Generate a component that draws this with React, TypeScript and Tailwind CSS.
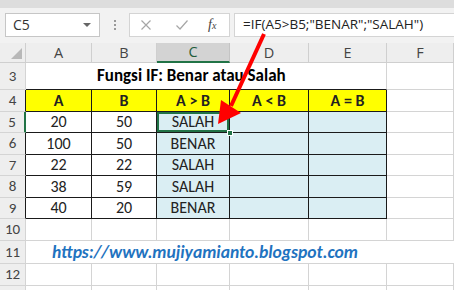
import React from "react";

// column widths: row header, A, B, C, D, E, F
const colW = ["w-[26px]", "w-[66px]", "w-[65px]", "w-[73px]", "w-[79px]", "w-[78px]", "w-[67px]"];
const cellFont = { fontFamily: "Carlito, Calibri, Lato, 'Liberation Sans', sans-serif" };
const uiFont = { fontFamily: "'Segoe UI', 'Open Sans', 'Noto Sans', sans-serif" };

const data = [
  { row: 5, a: "20", b: "50", c: "SALAH", h: "h-[21px]" },
  { row: 6, a: "100", b: "50", c: "BENAR", h: "h-[22px]" },
  { row: 7, a: "22", b: "22", c: "SALAH", h: "h-[21px]" },
  { row: 8, a: "38", b: "59", c: "SALAH", h: "h-[22px]" },
  { row: 9, a: "40", b: "20", c: "BENAR", h: "h-[21px]" },
];

function RowHead({ n, className = "" }: { n?: number; className?: string }) {
  return (
    <div
      className={`${colW[0]} shrink-0 flex items-center justify-center border-b border-r border-[#d4d4d4] bg-[#eeeeee] text-[15px] text-[#444] ${className}`}
      style={cellFont}
    >
      {n}
    </div>
  );
}

function Cell({ w, className = "", children }: { w: string; className?: string; children?: React.ReactNode }) {
  return (
    <div
      className={`${w} shrink-0 relative flex items-center justify-center border-b border-r text-[16px] text-[#222] ${className}`}
      style={cellFont}
    >
      {children}
    </div>
  );
}

function FormulaBar() {
  return (
    <div className="bg-[#f2f2f2]">
      <div className="h-[8px] bg-[#dddddd]" />
      <div className="flex items-center h-[29px] pt-[4px]">
        <div className="ml-[5px] w-[95px] h-[24px] bg-white border border-[#c6c6c6] flex items-center justify-between pl-[7px] pr-[8px]">
          <span className="text-[14px] text-[#333]" style={uiFont}>C5</span>
          <span className="w-0 h-0 border-l-[4px] border-r-[4px] border-t-[4px] border-l-transparent border-r-transparent border-t-[#666]" />
        </div>
        <div className="w-[29px] flex flex-col items-center gap-[2px]">
          <span className="w-[2px] h-[2px] bg-[#9a9a9a]" />
          <span className="w-[2px] h-[2px] bg-[#9a9a9a]" />
          <span className="w-[2px] h-[2px] bg-[#9a9a9a]" />
        </div>
        <div className="w-[101px] h-[24px] bg-white border border-[#d4d4d4] flex items-center">
          <svg width="12" height="12" viewBox="0 0 12 12" className="ml-[10px]">
            <path d="M1.5 1.5 L10.5 10.5 M10.5 1.5 L1.5 10.5" stroke="#a6a6a6" strokeWidth="1.2" />
          </svg>
          <svg width="14" height="12" viewBox="0 0 14 12" className="ml-[23px]">
            <path d="M1.5 6.5 L5 10 L12.5 1.5" stroke="#a6a6a6" strokeWidth="1.2" fill="none" />
          </svg>
          <span className="ml-[19px] italic text-[14px] text-[#444]" style={{ fontFamily: "'Liberation Serif', serif" }}>
            f<span className="text-[10px]">x</span>
          </span>
        </div>
        <div className="ml-[4px] flex-1 h-[24px] bg-white border border-[#d4d4d4] border-r-0 flex items-center pl-[8px]">
          <span className="text-[13.5px] text-[#222] whitespace-nowrap" style={uiFont}>
            =IF(A5&gt;B5;"BENAR";"SALAH")
          </span>
        </div>
      </div>
      <div className="h-[6px]" />
    </div>
  );
}

function ColumnHeads() {
  const letters = ["A", "B", "C", "D", "E", "F"];
  return (
    <div className="flex h-[20px]">
      <div className={`${colW[0]} shrink-0 relative bg-[#eeeeee] border-r border-b border-[#cfcfcf]`}>
        <svg className="absolute right-[3px] bottom-[3px]" width="11" height="11" viewBox="0 0 11 11">
          <polygon points="11,0 11,11 0,11" fill="#b8b8b8" />
        </svg>
      </div>
      {letters.map((l, i) => (
        <div
          key={l}
          className={`${colW[i + 1]} shrink-0 flex items-center justify-center text-[14.5px] border-r ${
            l === "C"
              ? "bg-[#d3d3d3] text-[#1f5c3a] border-b-2 border-b-[#217346] border-r-[#c4c4c4]"
              : "bg-[#eeeeee] text-[#444] border-b border-[#cfcfcf]"
          }`}
          style={uiFont}
        >
          {l}
        </div>
      ))}
    </div>
  );
}

export default function App() {
  return (
    <div className="w-[454px] h-[290px] overflow-hidden bg-white relative">
      <FormulaBar />
      <ColumnHeads />

      {/* row 3 */}
      <div className="flex h-[27px]">
        <RowHead n={3} />
        <div
          className="w-[361px] shrink-0 flex items-center pl-[71px] border-b border-r border-b-[#1a1a1a] border-r-[#d4d4d4] text-[17px] font-bold text-black"
          style={cellFont}
        >
          Fungsi IF: Benar atau Salah
        </div>
        <Cell w={colW[6]} className="border-[#d4d4d4]" />
      </div>

      {/* row 4 */}
      <div className="flex h-[22px]">
        <RowHead n={4} className="border-r-[#1a1a1a]" />
        {["A", "B", "A > B", "A < B", "A = B"].map((t, i) => (
          <Cell key={t} w={colW[i + 1]} className="bg-[#ffff00] border-[#1a1a1a] font-bold">
            {t}
          </Cell>
        ))}
        <Cell w={colW[6]} className="border-[#d4d4d4]" />
      </div>

      {data.map((d) => (
        <div key={d.row} className={`flex ${d.h}`}>
          <RowHead
            n={d.row}
            className={d.row === 5 ? "bg-[#d3d3d3] border-r-2 border-r-[#217346]" : "border-r-[#1a1a1a]"}
          />
          <Cell w={colW[1]} className="border-[#1a1a1a]">{d.a}</Cell>
          <Cell w={colW[2]} className="border-[#1a1a1a]">{d.b}</Cell>
          <Cell
            w={colW[3]}
            className={`bg-[#daeef3] border-[#1a1a1a] ${d.row === 5 ? "shadow-[inset_0_0_0_2px_#217346]" : ""}`}
          >
            {d.c}
            {d.row === 5 && (
              <span className="absolute right-[-4px] bottom-[-4px] w-[6px] h-[6px] bg-[#217346] border border-white z-10" />
            )}
          </Cell>
          <Cell w={colW[4]} className="bg-[#daeef3] border-[#1a1a1a]" />
          <Cell w={colW[5]} className="bg-[#daeef3] border-[#1a1a1a]" />
          <Cell w={colW[6]} className="border-[#d4d4d4]" />
        </div>
      ))}

      {/* row 10 */}
      <div className="flex h-[22px]">
        <RowHead n={10} />
        {colW.slice(1).map((w, i) => (
          <Cell key={i} w={w} className="border-[#d4d4d4]" />
        ))}
      </div>

      {/* row 11 */}
      <div className="flex h-[23px]">
        <RowHead n={11} />
        <div
          className="w-[428px] shrink-0 flex items-center pl-[26px] border-b border-[#d4d4d4] text-[17.6px] font-bold italic text-[#1f73c0] whitespace-nowrap"
          style={cellFont}
        >
          https://www.mujiyamianto.blogspot.com
        </div>
      </div>

      {/* row 12 */}
      <div className="flex h-[22px]">
        <RowHead n={12} />
        {colW.slice(1).map((w, i) => (
          <Cell key={i} w={w} className="border-[#d4d4d4]" />
        ))}
      </div>

      {/* row 13, only its top edge is in view */}
      <div className="flex h-[10px]">
        <RowHead />
        {colW.slice(1).map((w, i) => (
          <Cell key={i} w={w} className="border-[#d4d4d4]" />
        ))}
      </div>

      {/* red annotation arrow */}
      <svg className="absolute left-0 top-0 pointer-events-none" width="454" height="290">
        <line x1="264" y1="34" x2="231" y2="106" stroke="#ff0000" strokeWidth="4" />
        <polygon points="218,124 221,100 241,113" fill="#ff0000" />
      </svg>
    </div>
  );
}
